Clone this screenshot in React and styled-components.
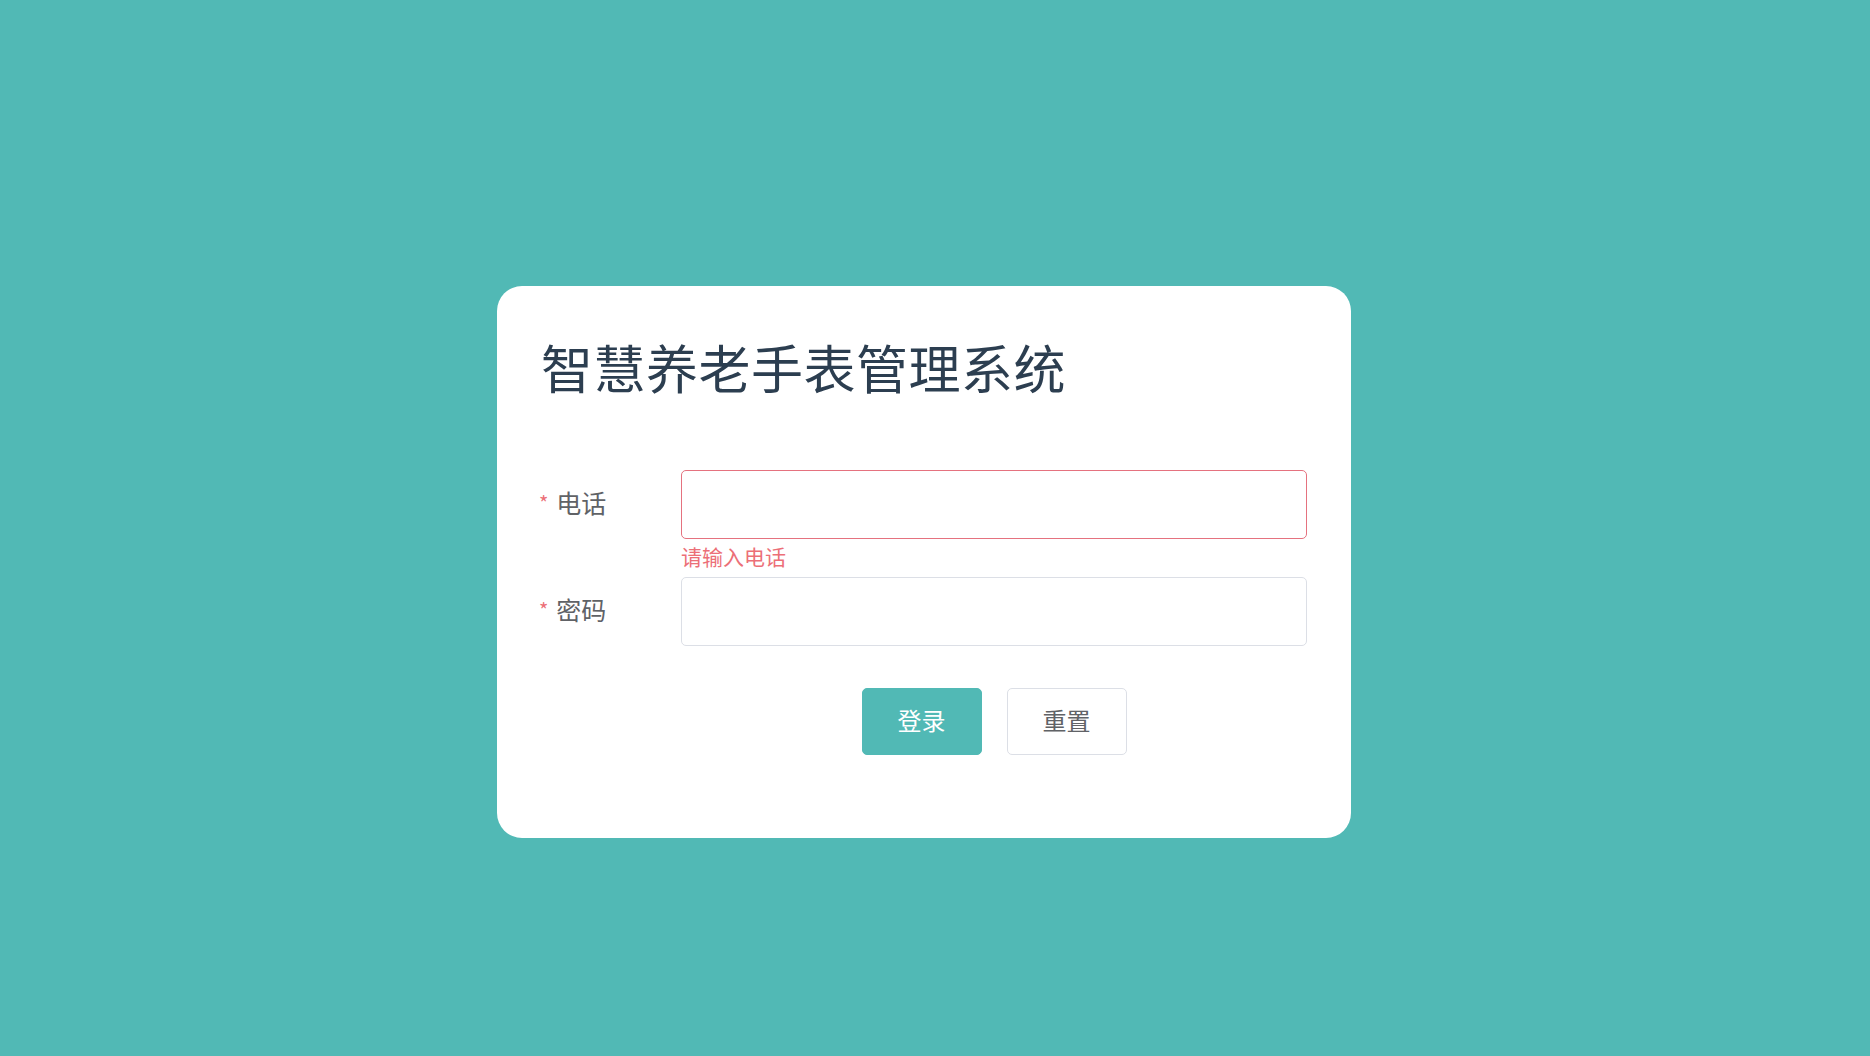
import React from "react";
import styled, { createGlobalStyle } from "styled-components";

const GlobalStyle = createGlobalStyle`
  html, body {
    margin: 0;
    padding: 0;
    background: #51b9b5;
  }
  body {
    font-family: "Noto Sans CJK SC", "Noto Sans", sans-serif;
  }
  * { box-sizing: border-box; }
`;

const Page = styled.div`
  min-height: 100vh;
  display: flex;
  justify-content: center;
  align-items: flex-start;
  padding: 286px 22px 0 0;
  background: #51b9b5;
`;

const Card = styled.div`
  width: 854px;
  height: 552px;
  background: #ffffff;
  border-radius: 25px;
  padding: 55px 44px 0 44px;
  display: flex;
  flex-direction: column;
`;

const Title = styled.h1`
  margin: 0;
  font-size: 52px;
  line-height: 52px;
  font-weight: 400;
  color: #2c3e50;
  letter-spacing: 0.5px;
`;

const Form = styled.form`
  margin-top: 77px;
  display: flex;
  flex-direction: column;
`;

const FormItem = styled.div`
  display: flex;
  align-items: flex-start;
  margin-bottom: ${(p) => p.$mb}px;
`;

const Label = styled.label`
  width: 140px;
  flex-shrink: 0;
  height: 69px;
  padding-bottom: 5px;
  display: flex;
  align-items: center;
  font-size: 25px;
  color: #606266;
`;

const Star = styled.span`
  color: #ec6f77;
  font-size: 20px;
  margin-left: -2px;
  margin-right: 8px;
  position: relative;
  top: 0px;
`;

const Field = styled.div`
  flex: 1;
  display: flex;
  flex-direction: column;
`;

const Input = styled.input`
  width: 100%;
  height: 69px;
  border: 1px solid ${(p) => (p.$error ? "#e5727f" : "#dcdfe6")};
  border-radius: 5px;
  padding: 0 18px;
  font-size: 22px;
  outline: none;
  background: #fff;
`;

const ErrorText = styled.div`
  color: #ec6f77;
  font-size: 21px;
  line-height: 22px;
  margin-top: 6px;
  height: 22px;
`;

const Buttons = styled.div`
  display: flex;
  justify-content: center;
  gap: 25px;
  padding-left: 140px;
  margin-top: 42px;
`;

const Button = styled.button`
  width: 120px;
  height: 67px;
  padding: 0 0 5px 0;
  border-radius: 5px;
  font-family: inherit;
  font-size: 24px;
  cursor: pointer;
  border: 1px solid ${(p) => (p.$primary ? "#51b9b5" : "#dcdfe6")};
  background: ${(p) => (p.$primary ? "#51b9b5" : "#ffffff")};
  color: ${(p) => (p.$primary ? "#ffffff" : "#606266")};
`;

export default function App() {
  return (
    <>
      <GlobalStyle />
      <Page>
        <Card>
          <Title>智慧养老手表管理系统</Title>
          <Form onSubmit={(e) => e.preventDefault()}>
            <FormItem $mb={10}>
              <Label>
                <Star>*</Star>电话
              </Label>
              <Field>
                <Input $error type="text" />
                <ErrorText>请输入电话</ErrorText>
              </Field>
            </FormItem>
            <FormItem $mb={0}>
              <Label>
                <Star>*</Star>密码
              </Label>
              <Field>
                <Input type="password" />
              </Field>
            </FormItem>
            <Buttons>
              <Button $primary type="submit">登录</Button>
              <Button type="button">重置</Button>
            </Buttons>
          </Form>
        </Card>
      </Page>
    </>
  );
}
